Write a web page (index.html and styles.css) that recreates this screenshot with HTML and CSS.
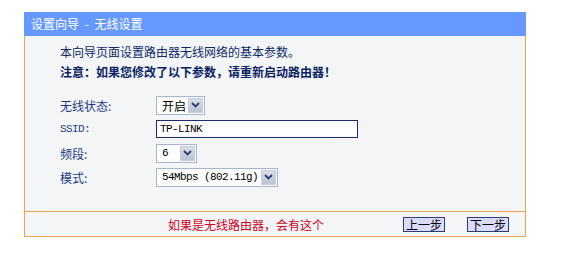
FILE: index.html
```html
<!DOCTYPE html>
<html lang="zh-CN">
<head>
<meta charset="utf-8">
<title>设置向导 - 无线设置</title>
<link rel="stylesheet" href="styles.css">
</head>
<body>
<div class="panel">
  <div class="panel-head">设置向导 - 无线设置</div>
  <div class="panel-body">
    <p class="intro">本向导页面设置路由器无线网络的基本参数。</p>
    <p class="intro warn">注意：如果您修改了以下参数，请重新启动路由器！</p>
    <div class="form">
      <div class="row">
        <span class="label">无线状态:</span>
        <span class="select w-state"><span class="val">开启</span><span class="arrow"><svg width="9" height="6" viewBox="0 0 9 6"><path d="M1 1 L4.5 4.5 L8 1" fill="none" stroke="#2b3d6b" stroke-width="1.8"/></svg></span></span>
      </div>
      <div class="row">
        <span class="label mono">SSID:</span>
        <span class="input mono">TP-LINK</span>
      </div>
      <div class="row">
        <span class="label">频段:</span>
        <span class="select w-chan"><span class="val mono">6</span><span class="arrow"><svg width="9" height="6" viewBox="0 0 9 6"><path d="M1 1 L4.5 4.5 L8 1" fill="none" stroke="#2b3d6b" stroke-width="1.8"/></svg></span></span>
      </div>
      <div class="row">
        <span class="label">模式:</span>
        <span class="select w-mode"><span class="val mono">54Mbps (802.11g)</span><span class="arrow"><svg width="9" height="6" viewBox="0 0 9 6"><path d="M1 1 L4.5 4.5 L8 1" fill="none" stroke="#2b3d6b" stroke-width="1.8"/></svg></span></span>
      </div>
    </div>
  </div>
  <div class="panel-foot">
    <span class="note">如果是无线路由器，会有这个</span>
    <div class="buttons">
      <button class="btn">上一步</button>
      <button class="btn">下一步</button>
    </div>
  </div>
</div>
</body>
</html>
```
FILE: styles.css
```css
* { box-sizing: border-box; }
body {
  margin: 0;
  background: #ffffff;
  font-family: "Noto Sans CJK SC", "Liberation Sans", sans-serif;
  font-size: 12px;
}
.panel {
  margin: 12px 0 0 24px;
  width: 502px;
}
.panel-head {
  height: 24px;
  line-height: 23px;
  background: #6699ff;
  color: #ffffff;
  padding-left: 7px;
  font-size: 12px;
  word-spacing: 3px;
}
.panel-body {
  background: #f4f5f6;
  border-left: 1px solid #f2a24a;
  border-right: 1px solid #f2a24a;
  padding: 6px 0 22px 35px;
}
.intro {
  margin: 0;
  line-height: 20px;
  color: #0c2a66;
}
.warn {
  font-weight: bold;
  color: #0a2363;
}
.form {
  margin-top: 11px;
}
.row {
  display: flex;
  align-items: center;
  height: 24px;
}
.label {
  width: 96px;
  color: #1b3a85;
}
.mono {
  font-family: "Liberation Mono", "DejaVu Sans Mono", monospace;
  font-size: 11px;
  letter-spacing: -0.6px;
}
.select {
  display: flex;
  align-items: center;
  height: 19px;
  background: #ffffff;
  border: 1px solid #a5b7cf;
  padding: 1px;
}
.select .val {
  flex: 1;
  padding-left: 4px;
  color: #000000;
  line-height: 15px;
}
.arrow {
  width: 15px;
  height: 15px;
  background: linear-gradient(#d9dce6, #bcc2d4);
  border: 1px solid #c7cdda;
  display: flex;
  align-items: center;
  justify-content: center;
}
.w-state { width: 49px; }
.w-chan { width: 41px; }
.w-mode { width: 122px; }
.input {
  width: 202px;
  height: 18px;
  line-height: 16px;
  border: 1px solid #1c2c6b;
  background: #ffffff;
  padding-left: 3px;
  color: #000000;
}
.panel-foot {
  display: flex;
  align-items: center;
  height: 26px;
  background: #f4f5f6;
  border: 1px solid #f2a24a;
  padding-left: 143px;
  padding-right: 16px;
}
.note {
  color: #d0021b;
}
.buttons {
  margin-left: auto;
  display: flex;
  gap: 22px;
}
.btn {
  width: 42px;
  height: 15px;
  padding: 0;
  margin: 0;
  border: 1px solid #2a3f7a;
  background: #dbdcfb;
  font-family: "Noto Sans CJK SC", sans-serif;
  font-size: 12px;
  line-height: 13px;
  color: #000000;
}
```
